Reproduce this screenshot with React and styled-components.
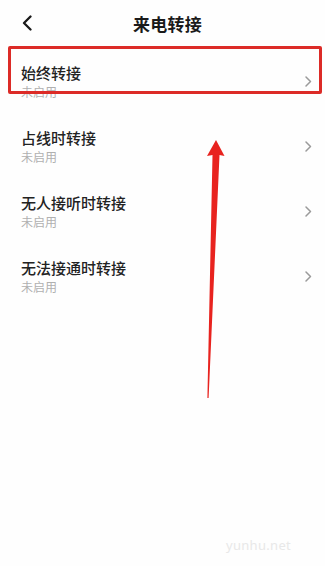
import React from "react"
import styled, { createGlobalStyle } from "styled-components"

const GlobalStyle = createGlobalStyle`
  html, body {
    margin: 0;
    padding: 0;
    background: #fefefe;
  }
  body {
    font-family: "Noto Sans CJK SC", "Noto Sans", sans-serif;
    -webkit-font-smoothing: antialiased;
  }
`

const Screen = styled.div`
  position: relative;
  width: 325px;
  height: 566px;
  overflow: hidden;
  background: #fefefe;
`

const Header = styled.header`
  height: 46px;
  display: grid;
  grid-template-columns: 46px 1fr 46px;
  align-items: center;
`

const BackButton = styled.button`
  border: 0;
  background: none;
  padding: 0 0 0 22px;
  height: 46px;
  display: flex;
  align-items: center;
  cursor: pointer;
  svg {
    margin-top: -1px;
  }
`

const Title = styled.h1`
  margin: 0;
  padding-left: 10px;
  text-align: center;
  font-size: 17px;
  font-weight: 700;
  color: #1a1a1a;
  letter-spacing: 0.3px;
`

const List = styled.ul`
  list-style: none;
  margin: 0;
  padding: 0;
`

const Row = styled.li`
  height: 65px;
  display: flex;
  align-items: flex-start;
  justify-content: space-between;
  padding: 17px 13px 0 21px;
  box-sizing: border-box;
`

const RowText = styled.div`
  display: flex;
  flex-direction: column;
`

const RowTitle = styled.span`
  font-size: 15px;
  line-height: 20px;
  font-weight: 500;
  color: #222;
`

const RowStatus = styled.span`
  font-size: 12px;
  line-height: 17px;
  color: #b0b0b0;
`

const Chevron = styled.span`
  margin-top: 12px;
  display: flex;
`

const Highlight = styled.div`
  position: absolute;
  left: 8px;
  top: 46px;
  width: 314px;
  height: 48px;
  box-sizing: border-box;
  border: 3px solid #dc2b27;
  border-radius: 2px;
  pointer-events: none;
`

const ArrowMark = styled.svg`
  position: absolute;
  left: 0;
  top: 0;
  pointer-events: none;
`

const Watermark = styled.span`
  position: absolute;
  left: 226px;
  top: 536px;
  font-family: "Noto Sans", sans-serif;
  font-size: 13px;
  color: #e8e8e8;
  letter-spacing: 0.3px;
`

const options = [
  { title: "始终转接", status: "未启用" },
  { title: "占线时转接", status: "未启用" },
  { title: "无人接听时转接", status: "未启用" },
  { title: "无法接通时转接", status: "未启用" },
]

const App = () => {
  return (
    <Screen>
      <GlobalStyle />
      <Header>
        <BackButton aria-label="返回">
          <svg width="10" height="16" viewBox="0 0 10 16">
            <path
              d="M8.5 1.5 L2 8 L8.5 14.5"
              fill="none"
              stroke="#1a1a1a"
              strokeWidth="2.3"
              strokeLinecap="round"
              strokeLinejoin="round"
            />
          </svg>
        </BackButton>
        <Title>来电转接</Title>
        <span />
      </Header>
      <List>
        {options.map((item) => (
          <Row key={item.title}>
            <RowText>
              <RowTitle>{item.title}</RowTitle>
              <RowStatus>{item.status}</RowStatus>
            </RowText>
            <Chevron>
              <svg width="8" height="13" viewBox="0 0 8 13">
                <path
                  d="M2 2 L6.5 6.5 L2 11"
                  fill="none"
                  stroke="#9a9a9a"
                  strokeWidth="1.5"
                  strokeLinecap="round"
                  strokeLinejoin="round"
                />
              </svg>
            </Chevron>
          </Row>
        ))}
      </List>

      {/* annotation overlays */}
      <Highlight />
      <ArrowMark width="325" height="566" viewBox="0 0 325 566">
        <polygon
          points="216,140 224.5,156 219.5,155 208.6,398 207.4,398 212.5,155 207,156"
          fill="#e8231f"
        />
      </ArrowMark>
      <Watermark>yunhu.net</Watermark>
    </Screen>
  )
}

export default App
